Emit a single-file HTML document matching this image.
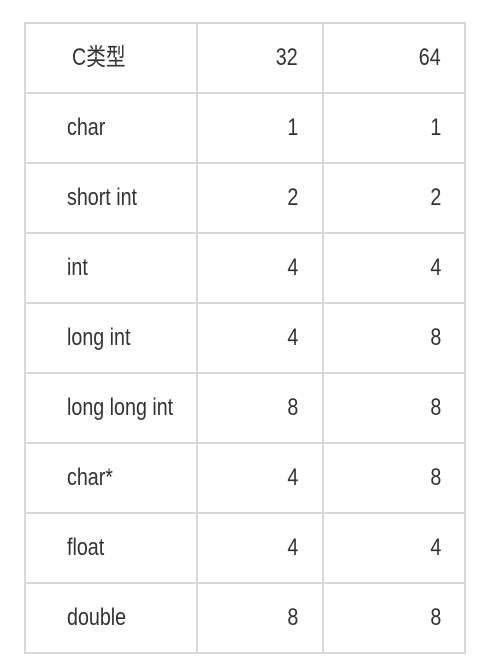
<!DOCTYPE html>
<html><head><meta charset="utf-8"><style>
body{margin:0;background:#fff;width:478px;height:672px;overflow:hidden}
.c{position:absolute;font-family:"Liberation Sans","Noto Sans CJK SC",sans-serif;font-size:24px;color:#333;line-height:24px;transform:scaleX(0.82);transform-origin:left center;white-space:nowrap}
.r{transform-origin:right center}
.h{position:absolute;background:#d8d8d8}
</style></head><body>
<div id="t"></div>
<script>
var rows=[["C类型","32","64"],["char","1","1"],["short int","2","2"],["int","4","4"],["long int","4","8"],["long long int","8","8"],["char*","4","8"],["float","4","4"],["double","8","8"]];
var h="";
for(var i=0;i<=9;i++)h+='<div class="h" style="left:24px;top:'+(22+i*70)+'px;width:442px;height:2px"></div>';
[24,196,322,464].forEach(function(x){h+='<div class="h" style="left:'+x+'px;top:22px;width:2px;height:632px"></div>'});
rows.forEach(function(r,i){var y=22+i*70+24;
h+='<div class="c" style="left:'+(i==0?72:67)+'px;top:'+y+'px">'+r[0]+'</div>';
h+='<div class="c r" style="right:'+(478-298)+'px;top:'+y+'px">'+r[1]+'</div>';
h+='<div class="c r" style="right:'+(478-441)+'px;top:'+y+'px">'+r[2]+'</div>';});
document.getElementById("t").innerHTML=h;
</script>
</body></html>
